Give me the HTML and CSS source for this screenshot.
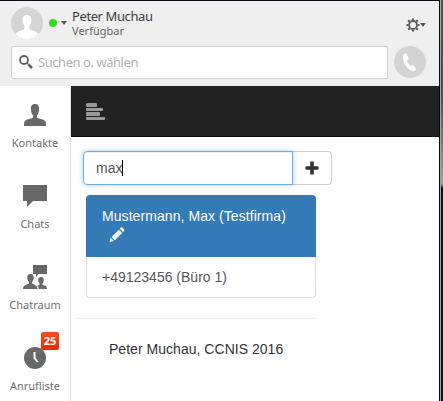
FILE: index.html
```html
<!DOCTYPE html>
<html lang="de">
<head>
<meta charset="utf-8">
<title>Kontakte</title>
<link rel="stylesheet" href="styles.css">
</head>
<body>
<div class="window">
  <div class="client">
    <header class="header">
      <div class="profile">
        <svg class="avatar" width="32" height="32" viewBox="0 0 32 32"><circle cx="16" cy="16" r="16" fill="#d4d4d4"/><path d="M16 8c-3.500 0-4.800 2.500-4.500 5.500.2 2.500 1 4 2 5v3.500c-2 1.300-6.500 1.800-9 5A16 16 0 0 0 16 32a16 16 0 0 0 11.500-5c-2.500-3.200-7-3.700-9-5v-3.500c1-1 1.800-2.500 2-5C20.800 10.500 19.500 8 16 8z" fill="#fff"/></svg>
        <span class="presence"></span>
        <span class="caret"></span>
        <div class="who"><div class="name">Peter Muchau</div><div class="status">Verfügbar</div></div>
        <div class="settings">
          <svg width="14" height="14" viewBox="0 0 14 14" fill="none" stroke="#606060"><circle cx="7" cy="7" r="4" stroke-width="1.800"/><path d="M7 .5v2M7 11.500v2M.5 7h2M11.500 7h2M2.200 2.200l1.600 1.600M10.200 10.200l1.600 1.600M2.200 11.800l1.600-1.600M10.200 3.800l1.600-1.600" stroke-width="2.200"/></svg>
          <span class="caret"></span>
        </div>
      </div>
      <div class="searchrow">
        <div class="search">
          <svg width="16" height="16" viewBox="0 0 16 16" fill="none" stroke="#606060"><circle cx="6" cy="6" r="4" stroke-width="1.800"/><path d="M9.200 9.200l.8.800" stroke-width="1.500"/><path d="M10.300 10.300l3.700 3.700" stroke-width="2.600"/></svg>
          <span>Suchen o. wählen</span>
        </div>
        <svg class="call" width="32" height="32" viewBox="0 0 32 32"><circle cx="16" cy="16" r="16" fill="#d3d3d3"/><path d="M9.500 8l2.700-1 2.600 5.500-2 2c.8 2.300 2 4 3.800 5.300l2.600-.7 3 4.200-1.700 1.600c-2 .7-5.200-.8-7.700-4C9.800 17.300 8 12 9.500 8z" fill="#fff"/></svg>
      </div>
    </header>
    <div class="body">
      <nav class="rail">
        <div class="tab"><svg width="24" height="24" viewBox="0 0 24 24" fill="#676869"><path d="M12 1C8.800 1 7.500 3.500 8 7c.2 2.700 1 4.300 2 5.200v2.300C8 16 3 16.200 1.600 18.500 1 19.500 1 21 1 23h22c0-2 0-3.500-.6-4.500C21 16.200 16 16 14 14.500v-2.300c1-.9 1.800-2.500 2-5.200.5-3.500-.8-6-4-6z"/></svg><span>Kontakte</span></div>
        <div class="tab"><svg width="24" height="24" viewBox="0 0 24 24" fill="#676869"><path d="M0 1h24v16H10l-6 6v-6H0z"/></svg><span>Chats</span></div>
        <div class="tab"><svg width="24" height="24" viewBox="0 0 24 24" fill="#676869"><path d="M10 0h14v9h-8.500L13 12V9h-3z"/><path d="M7.500 9C5 9 4 11 4.300 13.300c.2 1.700.8 2.800 1.600 3.500v1.700C4 20 0 19.500 0 24h14.500c0-4.500-3.600-4-5.400-5.500v-1.700c.8-.7 1.400-1.800 1.600-3.500C11 11 10 9 7.500 9z"/><path d="M18 12c-2.200 0-3 1.600-2.700 3.700.2 1.300.6 2.200 1.300 2.800v1.300l-2.200 1c1 .9 1.300 2 1.300 3.200H24c0-4-2.800-3.400-4.600-4.200v-1.300c.7-.6 1.100-1.500 1.300-2.800.3-2.100-.5-3.700-2.700-3.700z"/></svg><span>Chatraum</span></div>
        <div class="tab"><svg width="24" height="24" viewBox="0 0 24 24"><circle cx="12" cy="12" r="11" fill="#676869"/><path d="M11.500 6v6l3.200 4" fill="none" stroke="#fff" stroke-width="2"/></svg><span>Anrufliste</span><b class="badge">25</b></div>
      </nav>
      <main class="main">
        <div class="navbar"><svg width="20" height="18" viewBox="0 0 20 18" fill="#999"><rect x="0" y="0" width="11" height="4" rx="1"/><rect x="0" y="5" width="17" height="3" rx=".7"/><rect x="0" y="9" width="14" height="4" rx="1"/><rect x="0" y="14" width="19" height="3" rx=".7"/></svg></div>
        <div class="group">
          <div class="field">max<i class="cursor"></i></div>
          <div class="add"><svg width="14" height="14" viewBox="0 0 14 14"><path d="M7 .5v13M.5 7h13" stroke="#333" stroke-width="3.600"/></svg></div>
        </div>
        <div class="list">
          <div class="active">Mustermann, Max (Testfirma)<svg width="16" height="16" viewBox="0 0 16 16" fill="#fff"><path d="M.5 15l1.200-4.200 3.200 3.200zM2.600 9.900L9.900 2.700l3.300 3.200-7.400 7.300zM10.800 1.800l1.200-1.200q.7-.6 1.400 0l1.800 1.800q.6.700 0 1.400L14 5z"/></svg></div>
          <div class="entry">+49123456 (Büro 1)</div>
        </div>
        <hr class="rule">
        <div class="credit">Peter Muchau, CCNIS 2016</div>
      </main>
    </div>
  </div>
  <div class="edge"></div>
  <div class="backdrop"></div>
</div>
</body>
</html>
```
FILE: styles.css
```css
* { box-sizing: border-box; }
body { margin: 0; overflow: hidden; }
svg { display: block; flex: none; }
.window { display: grid; grid-template-columns: 440px 1px 2px; height: 401px; font-family: "Noto Sans", sans-serif; }
.client { border-top: 1px solid #120e18; border-right: 1px solid #080808; display: flex; flex-direction: column; background: #fff; }
.edge { background: #a4a4a4; }
.backdrop { background: linear-gradient(#555 0, #484c50 90px, #a0a0a0 184px, #06101c 188px); }
.header { height: 85px; background: #efefef; padding: 6px 13px 0 11px; }
.profile { display: flex; height: 32px; }
.presence { width: 8px; height: 8px; border-radius: 50%; background: #40d52b; margin: 12px 4px 0 6px; }
.caret { width: 6px; height: 4px; background: #555; clip-path: polygon(0 0, 100% 0, 50% 100%); margin: 14px 5px 0 0; }
.who { color: #3c3c40; white-space: nowrap; flex: 1; }
.name { font-size: 13px; line-height: 16px; margin-top: 1px; letter-spacing: -.4px; }
.status { font-size: 11px; line-height: 13px; color: #666; }
.settings { display: flex; padding-top: 11px; }
.settings .caret { margin: 5px 0 0 0; }
.searchrow { display: flex; margin-top: 7px; gap: 6px; }
.search { width: 377px; height: 33px; border: 1px solid #d2d2d2; border-radius: 2px; background: #fff; display: flex; align-items: center; padding-left: 6px; gap: 4px; font-size: 13px; color: #b2b2b2; }
.search svg { margin-top: -2px; }
.search span { letter-spacing: -.45px; margin-top: -1px; }
.body { display: flex; flex: 1; }
.rail { width: 71px; border-right: 1px solid #e2e2e2; }
.tab { height: 81px; padding-top: 17px; display: flex; flex-direction: column; align-items: center; position: relative; font-size: 11px; line-height: 14px; color: #707070; }
.tab span { margin-top: 9px; }
.badge { position: absolute; left: 41px; top: 3px; width: 18px; height: 18px; border-radius: 2px; background: linear-gradient(#f4511e, #ea2804); color: #fff; font-size: 11px; line-height: 18px; text-align: center; }
.main { flex: 1; font-family: "Liberation Sans", sans-serif; font-size: 14px; }
.navbar { height: 51px; background: #222; border-bottom: 1px solid #0a0a0a; padding: 17px 0 0 15px; }
.group { display: flex; margin: 14px 0 0 12px; height: 34px; }
.field { width: 210px; border: 1px solid #66afe9; border-radius: 4px 0 0 4px; box-shadow: inset 0 1px 1px rgba(0,0,0,.075), 0 0 5px rgba(102,175,233,.6); padding-left: 12px; display: flex; align-items: center; color: #555; z-index: 1; }
.cursor { width: 1px; height: 16px; background: #000; }
.add { width: 39px; border: 1px solid #ccc; border-left: 0; border-radius: 0 4px 4px 0; display: flex; align-items: center; justify-content: center; }
.list { width: 230px; margin: 10px 0 0 15px; line-height: 20px; }
.active { height: 62px; background: #337ab7; color: #fff; border-radius: 4px 4px 0 0; padding: 11px 16px; white-space: nowrap; letter-spacing: .07px; }
.active svg { margin: 1px 0 0 7px; }
.entry { height: 41px; border: 1px solid #ddd; border-top: 0; border-radius: 0 0 4px 4px; color: #555; padding: 10px 15px; }
.rule { width: 240px; height: 1px; border: 0; background: #eee; margin: 20px 0 0 5px; }
.credit { margin: 20px 0 0 38px; line-height: 20px; color: #333; letter-spacing: .03px; }
```
